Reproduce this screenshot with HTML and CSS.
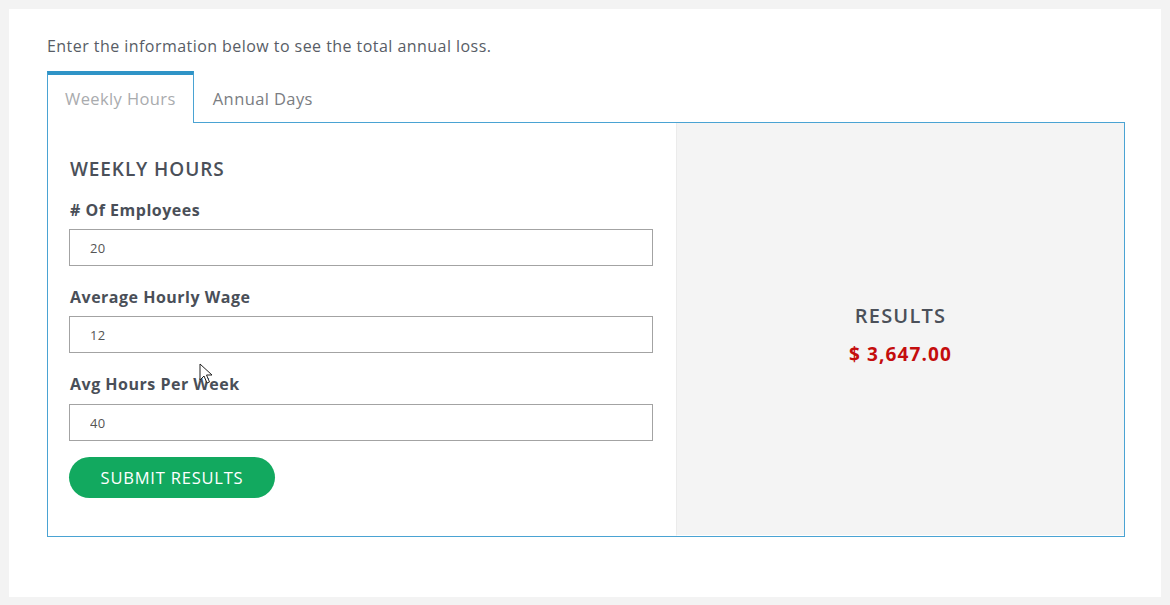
FILE: index.html
```html
<!DOCTYPE html>
<html lang="en">
<head>
<meta charset="utf-8">
<title>Annual Loss Calculator</title>
<link rel="stylesheet" href="styles.css">
</head>
<body>
<div class="card">
  <p class="intro">Enter the information below to see the total annual loss.</p>
  <div class="tabs">
    <div class="tab active">Weekly Hours</div>
    <div class="tab">Annual Days</div>
  </div>
  <div class="panel">
    <form class="form">
      <h2 class="form-title">WEEKLY HOURS</h2>
      <label class="label" for="emp"># Of Employees</label>
      <input class="field" id="emp" type="text" value="20">
      <label class="label" for="wage">Average Hourly Wage</label>
      <input class="field" id="wage" type="text" value="12">
      <label class="label label-last" for="hrs">Avg Hours Per Week</label>
      <input class="field field-last" id="hrs" type="text" value="40">
      <button class="submit" type="button">SUBMIT RESULTS</button>
    </form>
    <div class="results">
      <div class="results-title">RESULTS</div>
      <div class="results-amount">$ 3,647.00</div>
    </div>
  </div>
  <svg class="cursor" width="14" height="22" viewBox="0 0 14 22" aria-hidden="true">
    <path d="M1 1 L1 17 L5 13 L8 20 L10.5 19 L7.5 12 L13 12 Z" fill="#fff" stroke="#222" stroke-width="1" stroke-linejoin="round"/>
  </svg>
</div>
</body>
</html>
```
FILE: styles.css
```css
* { box-sizing: border-box; }
html, body { margin: 0; padding: 0; }
body {
  background: #f3f3f3;
  font-family: "Open Sans", "Liberation Sans", sans-serif;
  color: #4b5059;
}
.card {
  position: relative;
  margin: 9px 9px 0 9px;
  width: 1152px;
  height: 588px;
  background: #fff;
  padding: 26px 36px 0 38px;
}
.intro {
  margin: 0;
  font-size: 16px;
  line-height: 22px;
  letter-spacing: 0.45px;
  color: #585d66;
}
.tabs {
  display: flex;
  margin-top: 14px;
  position: relative;
  z-index: 1;
}
.tab {
  height: 52px;
  padding: 12px 17px 0 18px;
  font-size: 16.5px;
  line-height: 24px;
  letter-spacing: 0.4px;
  color: #7a7d82;
  border: 1px solid transparent;
  border-top: 4px solid transparent;
  border-bottom: none;
}
.tab.active {
  padding-left: 17px;
  color: #a9abae;
  background: #fff;
  border-color: #4aa3d3;
  border-top-color: #2f94c7;
}
.panel {
  display: flex;
  margin-top: -1px;
  height: 415px;
  border: 1px solid #4aa3d3;
}
.form {
  width: 628px;
  padding: 33px 22px 0 22px;
  display: flex;
  flex-direction: column;
  align-items: flex-start;
}
.form-title {
  margin: 0 0 16px 0;
  font-size: 19px;
  line-height: 26px;
  font-weight: 600;
  letter-spacing: 0.9px;
  color: #4b5059;
}
.label {
  font-size: 16px;
  line-height: 24px;
  font-weight: 700;
  letter-spacing: 0.5px;
  color: #4a4f58;
  margin-bottom: 7px;
}
.label-last { margin-bottom: 8px; }
.field {
  width: 584px;
  height: 37px;
  margin: 0 0 19px -1px;
  border: 1px solid #a3a3a3;
  padding: 0 0 0 20px;
  font-family: inherit;
  font-size: 13px;
  letter-spacing: 0.3px;
  color: #555;
  outline: none;
}
.field-last { margin-bottom: 16px; }
.submit {
  width: 206px;
  height: 41px;
  margin-left: -1px;
  border: none;
  border-radius: 21px;
  background: #12a95f;
  color: #fff;
  font-family: inherit;
  font-size: 16.5px;
  letter-spacing: 0.8px;
  padding: 0;
}
.results {
  flex: 1;
  background: #f4f4f4;
  border-left: 1px solid #ebebeb;
  border-bottom: 1px solid #fff;
  display: flex;
  flex-direction: column;
  align-items: center;
  justify-content: center;
  padding-top: 11px;
}
.results-title {
  font-size: 20px;
  line-height: 28px;
  font-weight: 600;
  letter-spacing: 1.2px;
  color: #4b5059;
}
.results-amount {
  margin-top: 11px;
  font-size: 19px;
  line-height: 26px;
  font-weight: 700;
  letter-spacing: 1.1px;
  color: #c40d0d;
}
.cursor {
  position: absolute;
  left: 190px;
  top: 354px;
}
```
